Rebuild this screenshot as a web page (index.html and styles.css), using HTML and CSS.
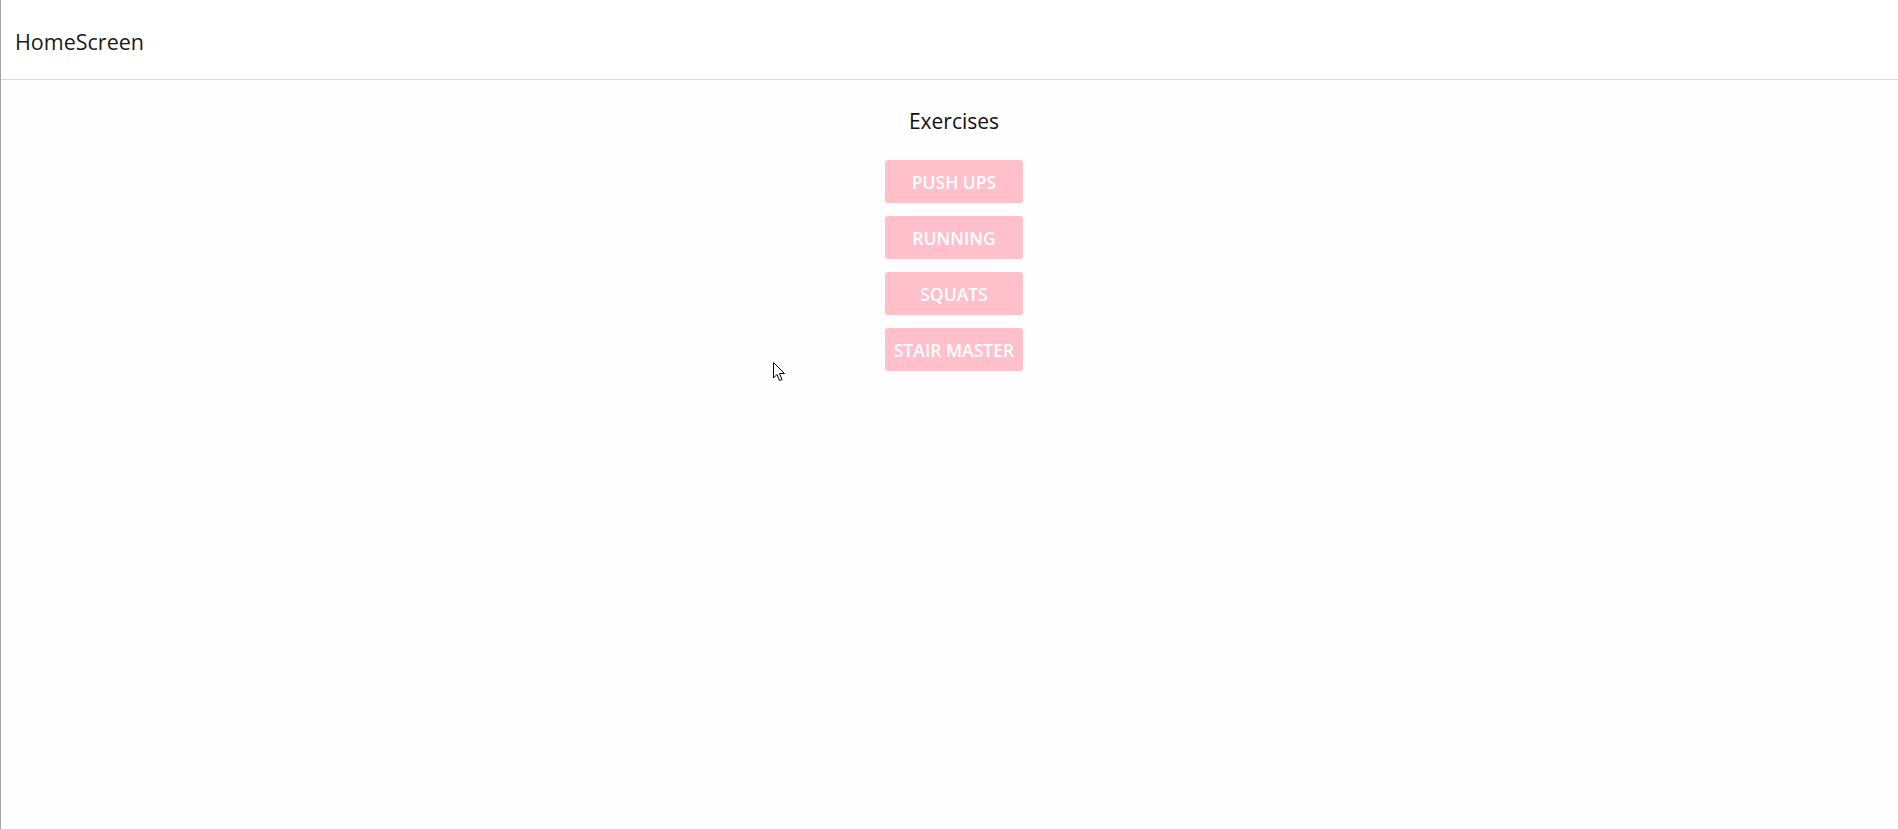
FILE: index.html
```html
<!DOCTYPE html>
<html>
<head>
<meta charset="utf-8">
<link rel="stylesheet" href="styles.css">
</head>
<body>
<div class="app">
  <header class="header">
    <div class="header-title">HomeScreen</div>
  </header>
  <main class="main">
    <h2 class="section-title">Exercises</h2>
    <div class="list">
      <button class="btn">PUSH UPS</button>
      <button class="btn">RUNNING</button>
      <button class="btn">SQUATS</button>
      <button class="btn">STAIR MASTER</button>
    </div>
  </main>
  <svg class="cursor" width="13" height="20" viewBox="0 0 13 20">
    <path d="M0.5 0.5 L0.5 16 L4 12.5 L6.5 18.5 L9 17.5 L6.5 11.5 L11.5 11.5 Z" fill="#fff" stroke="#000" stroke-width="1" stroke-linejoin="miter"/>
  </svg>
</div>
</body>
</html>
```
FILE: styles.css
```css
html, body {
  margin: 0;
  padding: 0;
  height: 100%;
}
body {
  font-family: "Open Sans", "Noto Sans", sans-serif;
  background: #fefefe;
  color: #111;
}
.app {
  position: relative;
  min-height: 100%;
  border-left: 1px solid #a3a3a3;
  box-sizing: border-box;
}
.header {
  height: 79px;
  background: #ffffff;
  border-bottom: 1px solid #d6d6d6;
  display: flex;
  align-items: center;
  padding-left: 14px;
}
.header-title {
  font-size: 21.5px;
  color: #1a1a1a;
  padding-top: 4px;
}
.main {
  display: flex;
  flex-direction: column;
  align-items: center;
  padding-left: 9px;
}
.section-title {
  margin: 0;
  margin-top: 26px;
  font-size: 21px;
  font-weight: 400;
  line-height: 30px;
  color: #111;
}
.list {
  display: inline-flex;
  flex-direction: column;
  gap: 13px;
  margin-top: 24px;
}
.btn {
  font-family: "Open Sans", "Noto Sans", sans-serif;
  background: #ffc0cb;
  color: #ffffff;
  border: none;
  border-radius: 3px;
  height: 43px;
  padding: 0 9px;
  font-size: 17.5px;
  font-weight: 600;
  cursor: pointer;
}
.cursor {
  position: absolute;
  left: 772px;
  top: 362px;
}
```
